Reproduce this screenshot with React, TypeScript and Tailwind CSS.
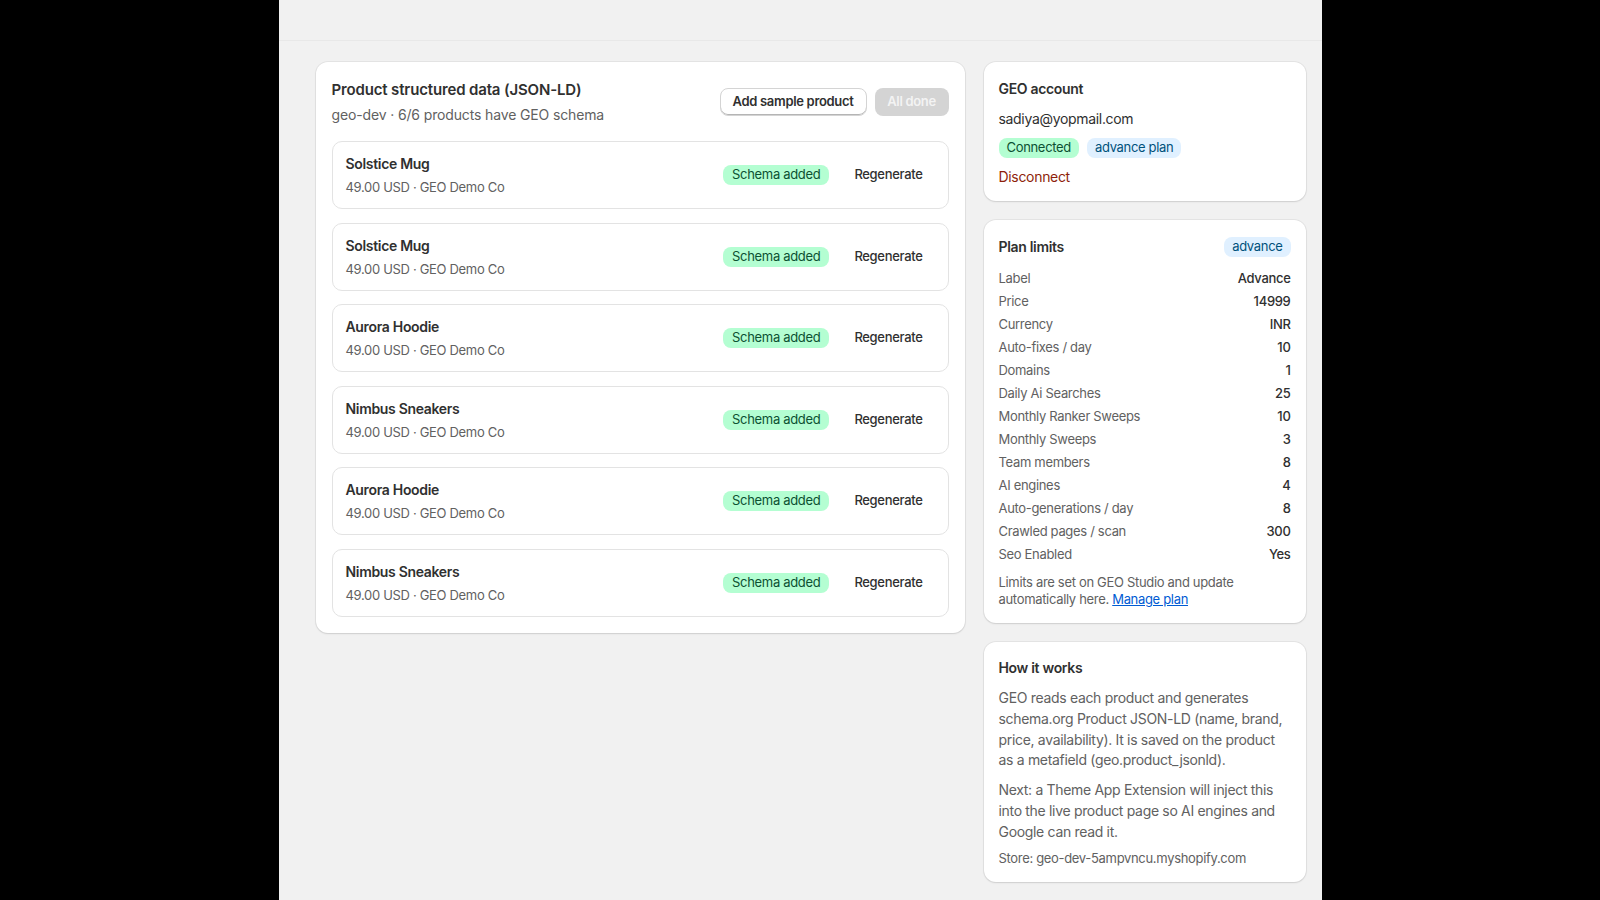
import React from 'react';

const products = [
  { name: 'Solstice Mug' },
  { name: 'Solstice Mug' },
  { name: 'Aurora Hoodie' },
  { name: 'Nimbus Sneakers' },
  { name: 'Aurora Hoodie' },
  { name: 'Nimbus Sneakers' },
];

const limits: [string, string][] = [
  ['Label', 'Advance'],
  ['Price', '14999'],
  ['Currency', 'INR'],
  ['Auto-fixes / day', '10'],
  ['Domains', '1'],
  ['Daily Ai Searches', '25'],
  ['Monthly Ranker Sweeps', '10'],
  ['Monthly Sweeps', '3'],
  ['Team members', '8'],
  ['AI engines', '4'],
  ['Auto-generations / day', '8'],
  ['Crawled pages / scan', '300'],
  ['Seo Enabled', 'Yes'],
];

const card =
  'rounded-[12px] bg-white shadow-[0_0_0_1px_rgba(0,0,0,0.05),0_1px_2px_rgba(0,0,0,0.1)]';

export default function App() {
  return (
    <div className="min-h-screen w-full bg-black font-['Inter',sans-serif] tracking-[-0.02em] text-[#303030]">
      <div className="mx-auto min-h-screen w-[1043px] bg-[#f1f1f1]">
        {/* Top band */}
        <div className="h-[41px] border-b border-[#e8e8e8]" />

        <div className="flex items-start gap-[19px] pl-[37px] pr-[16px] pt-[21px]">
          {/* Products card */}
          <div className={`${card} w-[649px] px-4 pb-4 pt-[18px]`}>
            <div className="flex items-center justify-between">
              <div>
                <div className="text-[15px] font-semibold leading-5 tracking-[-0.01em]">
                  Product structured data (JSON-LD)
                </div>
                <div className="mt-[6px] text-[14px] leading-[18px] tracking-[-0.01em] text-[#616161]">
                  geo-dev · 6/6 products have GEO schema
                </div>
              </div>
              <div className="flex gap-2">
                <button className="h-7 rounded-[8px] border border-[#d4d4d4] bg-white px-3 text-[13px] font-semibold text-[#303030] shadow-[inset_0_-1px_0_#b5b5b5]">
                  Add sample product
                </button>
                <button className="h-7 w-[74px] rounded-[8px] bg-[#d4d4d4] text-[13px] font-semibold text-[#f3f3f3]">
                  All done
                </button>
              </div>
            </div>

            <div className="mt-[17px] flex flex-col gap-[13.5px]">
              {products.map((p, i) => (
                <div
                  key={i}
                  className="flex h-[68px] items-center justify-between rounded-[10px] border border-[#e3e3e3] pl-[13px] pr-[13px]"
                >
                  <div className="flex flex-col gap-1">
                    <div className="text-[14px] font-semibold leading-5">{p.name}</div>
                    <div className="text-[13px] leading-[18px] text-[#616161]">49.00 USD · GEO Demo Co</div>
                  </div>
                  <div className="flex items-center gap-[13px]">
                    <span className="flex h-5 items-center rounded-[8px] bg-[#b4fed2] px-[9px] text-[13px] text-[#0c5132]">
                      Schema added
                    </span>
                    <button className="h-7 px-3 text-[13px] font-medium text-[#303030]">Regenerate</button>
                  </div>
                </div>
              ))}
            </div>
          </div>

          {/* Right column */}
          <div className="flex w-[322px] flex-col gap-[19px]">
            {/* GEO account */}
            <div className={`${card} px-[15px] pb-[14px] pt-[17px]`}>
              <div className="text-[14px] font-semibold leading-5">GEO account</div>
              <div className="mt-[10px] text-[14px] leading-5">sadiya@yopmail.com</div>
              <div className="mt-[9px] flex gap-2">
                <span className="flex h-5 items-center rounded-[8px] bg-[#b4fed2] px-2 text-[13px] text-[#0c5132]">
                  Connected
                </span>
                <span className="flex h-5 items-center rounded-[8px] bg-[#e0f0ff] px-2 text-[13px] text-[#00527c]">
                  advance plan
                </span>
              </div>
              <div className="mt-[9px] text-[14px] leading-5 text-[#8e1f0b]">Disconnect</div>
            </div>

            {/* Plan limits */}
            <div className={`${card} px-[15px] pb-[15px] pt-[17px]`}>
              <div className="flex items-center justify-between">
                <div className="text-[14px] font-semibold leading-5">Plan limits</div>
                <span className="flex h-5 items-center rounded-[8px] bg-[#e0f0ff] px-2 text-[13px] text-[#00527c]">
                  advance
                </span>
              </div>
              <div className="mt-[10px] flex flex-col">
                {limits.map(([k, v]) => (
                  <div key={k} className="flex h-[23px] items-center justify-between text-[13px]">
                    <span className="text-[#616161]">{k}</span>
                    <span className="font-medium text-[#303030]">{v}</span>
                  </div>
                ))}
              </div>
              <div className="mt-[8px] text-[13px] leading-[17px] text-[#616161]">
                Limits are set on GEO Studio and update automatically here.{' '}
                <a className="text-[#005bd3] underline">Manage plan</a>
              </div>
            </div>

            {/* How it works */}
            <div className={`${card} px-[15px] pb-[14px] pt-[16px]`}>
              <div className="text-[14px] font-semibold leading-5">How it works</div>
              <p className="mt-[10px] text-[14px] leading-[20.8px] text-[#616161]">
                GEO reads each product and generates schema.org Product JSON-LD (name, brand, price, availability). It is
                saved on the product as a metafield (geo.product_jsonld).
              </p>
              <p className="mt-[9px] text-[14px] leading-[20.8px] text-[#616161]">
                Next: a Theme App Extension will inject this into the live product page so AI engines and Google can read
                it.
              </p>
              <div className="mt-[5px] text-[13px] leading-5 text-[#616161]">Store: geo-dev-5ampvncu.myshopify.com</div>
            </div>
          </div>
        </div>
      </div>
    </div>
  );
}
